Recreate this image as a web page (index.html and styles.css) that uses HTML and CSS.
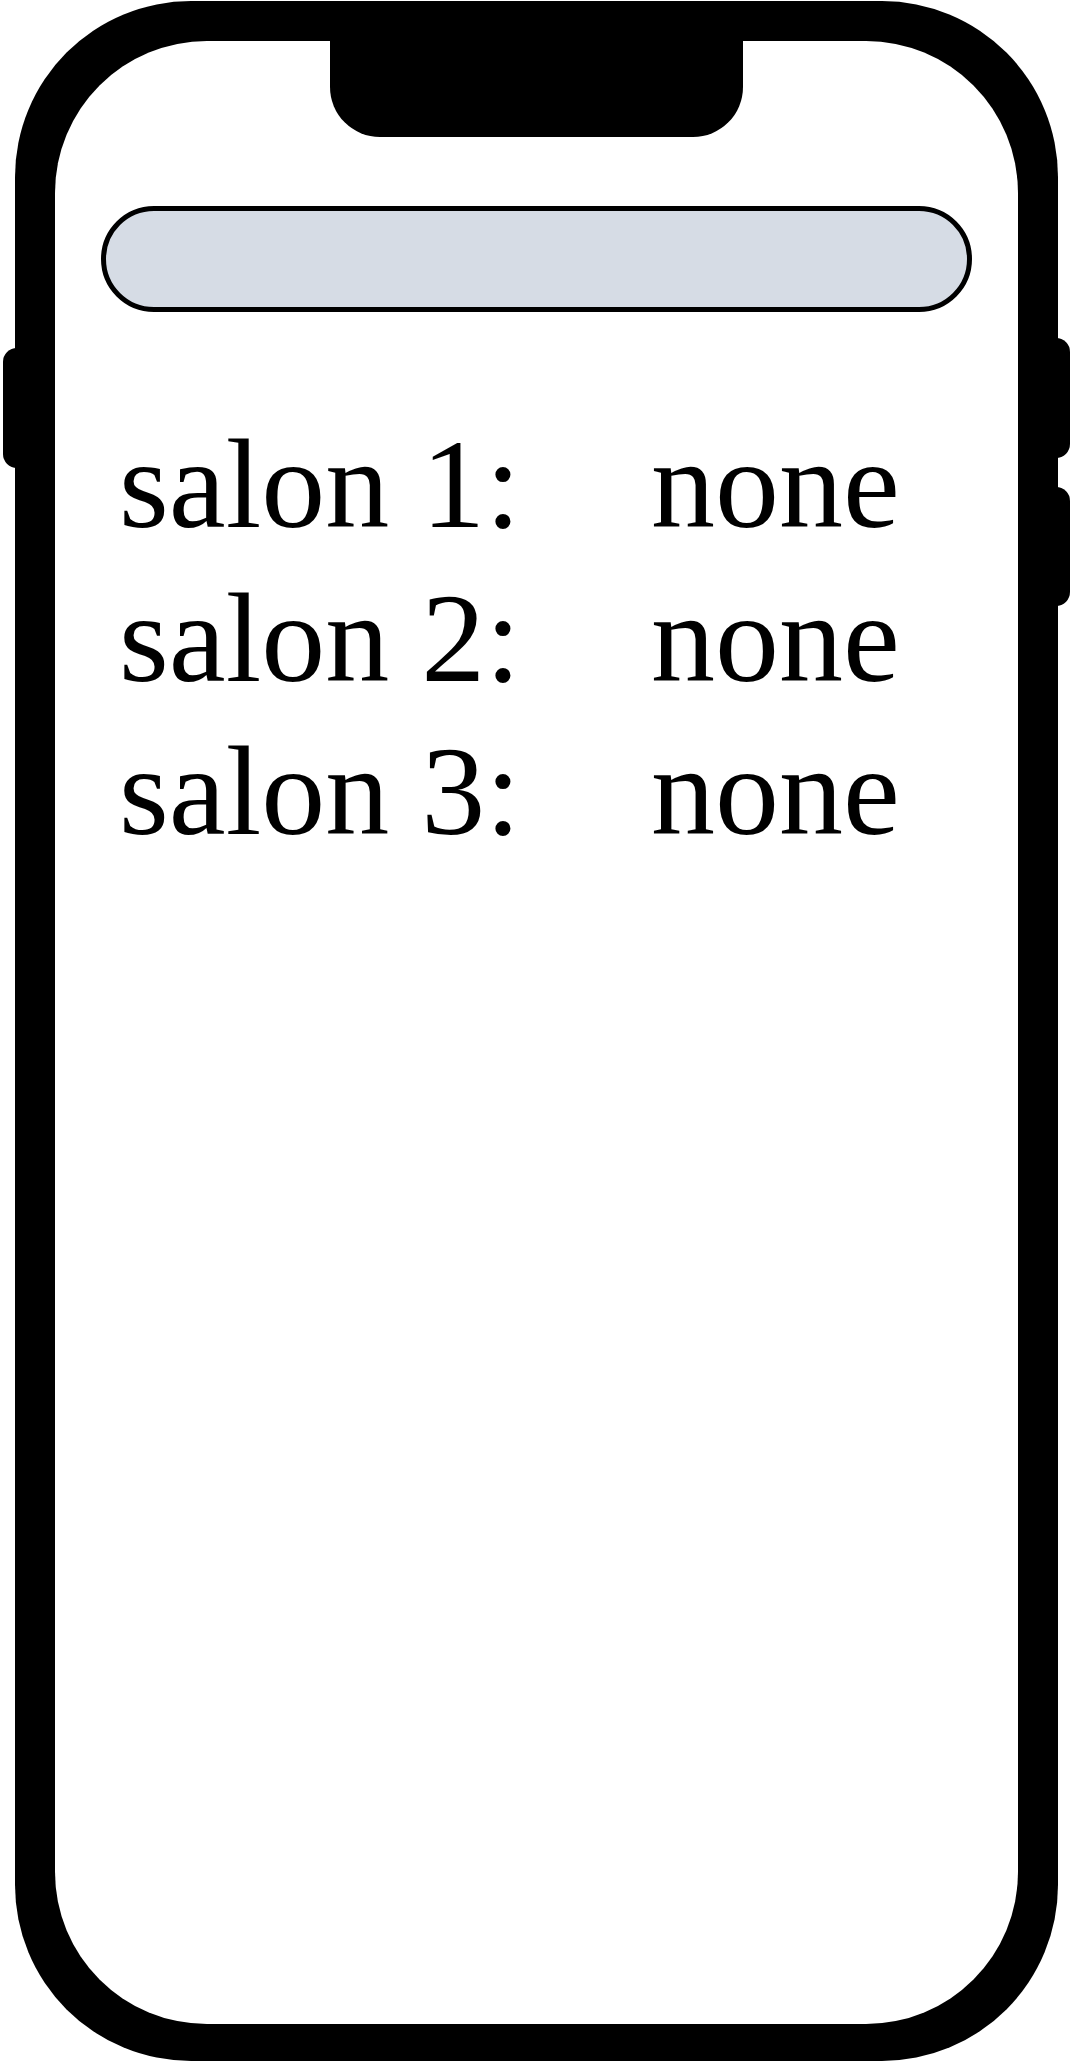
FILE: index.html
```html
<!DOCTYPE html>
<html>
<head>
<meta charset="utf-8">
<link rel="stylesheet" href="styles.css">
</head>
<body>
<div class="device">
  <div class="btn btn-left"></div>
  <div class="btn btn-right-1"></div>
  <div class="btn btn-right-2"></div>
  <div class="phone">
    <div class="screen">
      <div class="notch"></div>
      <div class="search"></div>
      <div class="list">
        <div class="row"><span class="label">salon 1:</span><span class="value">none</span></div>
        <div class="row"><span class="label">salon 2:</span><span class="value">none</span></div>
        <div class="row"><span class="label">salon 3:</span><span class="value">none</span></div>
      </div>
    </div>
  </div>
</div>
</body>
</html>
```

FILE: styles.css
```css
html, body {
  margin: 0;
  padding: 0;
  background: #fff;
}
body {
  padding: 1px 14px 1px 15px;
  font-family: "Liberation Serif", "Times New Roman", serif;
}
.device {
  position: relative;
  width: 1043px;
  height: 2060px;
}
.btn {
  position: absolute;
  background: #000;
  border-radius: 14px;
}
.btn-left {
  left: -12px;
  top: 347px;
  width: 40px;
  height: 120px;
}
.btn-right-1 {
  right: -12px;
  top: 337px;
  width: 40px;
  height: 120px;
}
.btn-right-2 {
  right: -12px;
  top: 486px;
  width: 40px;
  height: 119px;
}
.phone {
  position: relative;
  box-sizing: border-box;
  width: 100%;
  height: 100%;
  background: #000;
  border-radius: 176px;
  padding: 40px 40px 37px 40px;
}
.screen {
  position: relative;
  box-sizing: border-box;
  height: 100%;
  background: #fff;
  border-radius: 152px;
  padding: 165px 46px 0 46px;
}
.notch {
  position: absolute;
  top: -1px;
  left: 275px;
  width: 413px;
  height: 97px;
  background: #000;
  border-radius: 0 0 50px 50px;
}
.search {
  box-sizing: border-box;
  height: 106px;
  background: #d6dce5;
  border: 5px solid #000;
  border-radius: 53px;
}
.list {
  margin-top: 96px;
  padding-left: 18px;
}
.row {
  display: grid;
  grid-template-columns: 532px auto;
  font-size: 128px;
  line-height: 153.6px;
  color: #000;
}
```
